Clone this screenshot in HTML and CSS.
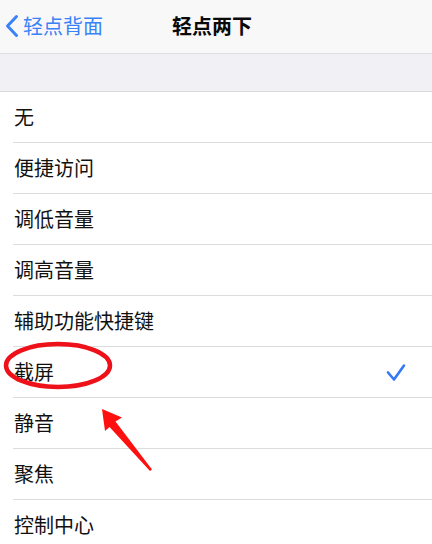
FILE: index.html
```html
<!DOCTYPE html>
<html lang="zh-CN">
<head>
<meta charset="utf-8">
<link rel="stylesheet" href="styles.css">
</head>
<body>
<div class="screen">
  <header class="nav">
    <div class="back">
      <svg class="chev" width="14" height="24" viewBox="0 0 14 24"><polyline points="11.5,2.5 2.5,12 11.5,21.5" fill="none" stroke="#3a82f7" stroke-width="3" stroke-linecap="round" stroke-linejoin="round"/></svg>
      <span>轻点背面</span>
    </div>
    <div class="title">轻点两下</div>
  </header>
  <div class="gap"></div>
  <ul class="list">
    <li class="row"><div class="inner">无</div></li>
    <li class="row"><div class="inner">便捷访问</div></li>
    <li class="row"><div class="inner">调低音量</div></li>
    <li class="row"><div class="inner">调高音量</div></li>
    <li class="row"><div class="inner">辅助功能快捷键</div></li>
    <li class="row"><div class="inner">截屏<svg class="check" width="20" height="19" viewBox="0 0 20 19"><polyline points="2,9.5 8,16.5 18,2.5" fill="none" stroke="#3478f6" stroke-width="2.6" stroke-linecap="round" stroke-linejoin="round"/></svg></div></li>
    <li class="row"><div class="inner">静音</div></li>
    <li class="row"><div class="inner">聚焦</div></li>
    <li class="row"><div class="inner">控制中心</div></li>
  </ul>
  <svg class="annot" width="432" height="544" viewBox="0 0 432 544">
    <ellipse cx="58" cy="365.5" rx="52" ry="21.5" fill="none" stroke="#ee1119" stroke-width="4.5"/>
    <polygon points="102,409 122,417.5 115.5,421.5 152,469.5 150,471 109.5,427 105,431" fill="#ff1010"/>
  </svg>
</div>
</body>
</html>
```
FILE: styles.css
```css
* { box-sizing: border-box; }
html, body { margin: 0; padding: 0; }
body {
  background: #ffffff;
  font-family: "Noto Sans CJK SC", "Noto Sans", sans-serif;
  color: #111111;
}
.screen {
  position: relative;
  width: 432px;
  height: 544px;
  overflow: hidden;
}
.nav {
  height: 54px;
  background: #f8f8f9;
  border-bottom: 1px solid #dedede;
  display: flex;
  align-items: center;
  position: relative;
}
.back {
  display: flex;
  align-items: center;
  gap: 4px;
  padding-left: 5px;
  color: #3a82f7;
  font-size: 20px;
  line-height: 24px;
  margin-top: -1px;
}
.chev { display: block; }
.title {
  position: absolute;
  left: 172px;
  top: 0;
  height: 53px;
  display: flex;
  align-items: center;
  font-size: 20px;
  font-weight: 700;
  color: #0a0a0a;
  margin-top: -1px;
}
.gap {
  height: 38px;
  background: #f0f0f5;
  border-bottom: 1px solid #dadada;
}
.list {
  list-style: none;
  margin: 0;
  padding: 0;
}
.row {
  padding-left: 13px;
  background: #ffffff;
}
.inner {
  height: 51px;
  border-bottom: 1px solid #dcdcdc;
  display: flex;
  align-items: center;
  justify-content: space-between;
  padding-left: 1px;
  padding-right: 26px;
  font-size: 20px;
  line-height: 24px;
}
.check { display: block; }
.annot {
  position: absolute;
  left: 0;
  top: 0;
  pointer-events: none;
}
```
